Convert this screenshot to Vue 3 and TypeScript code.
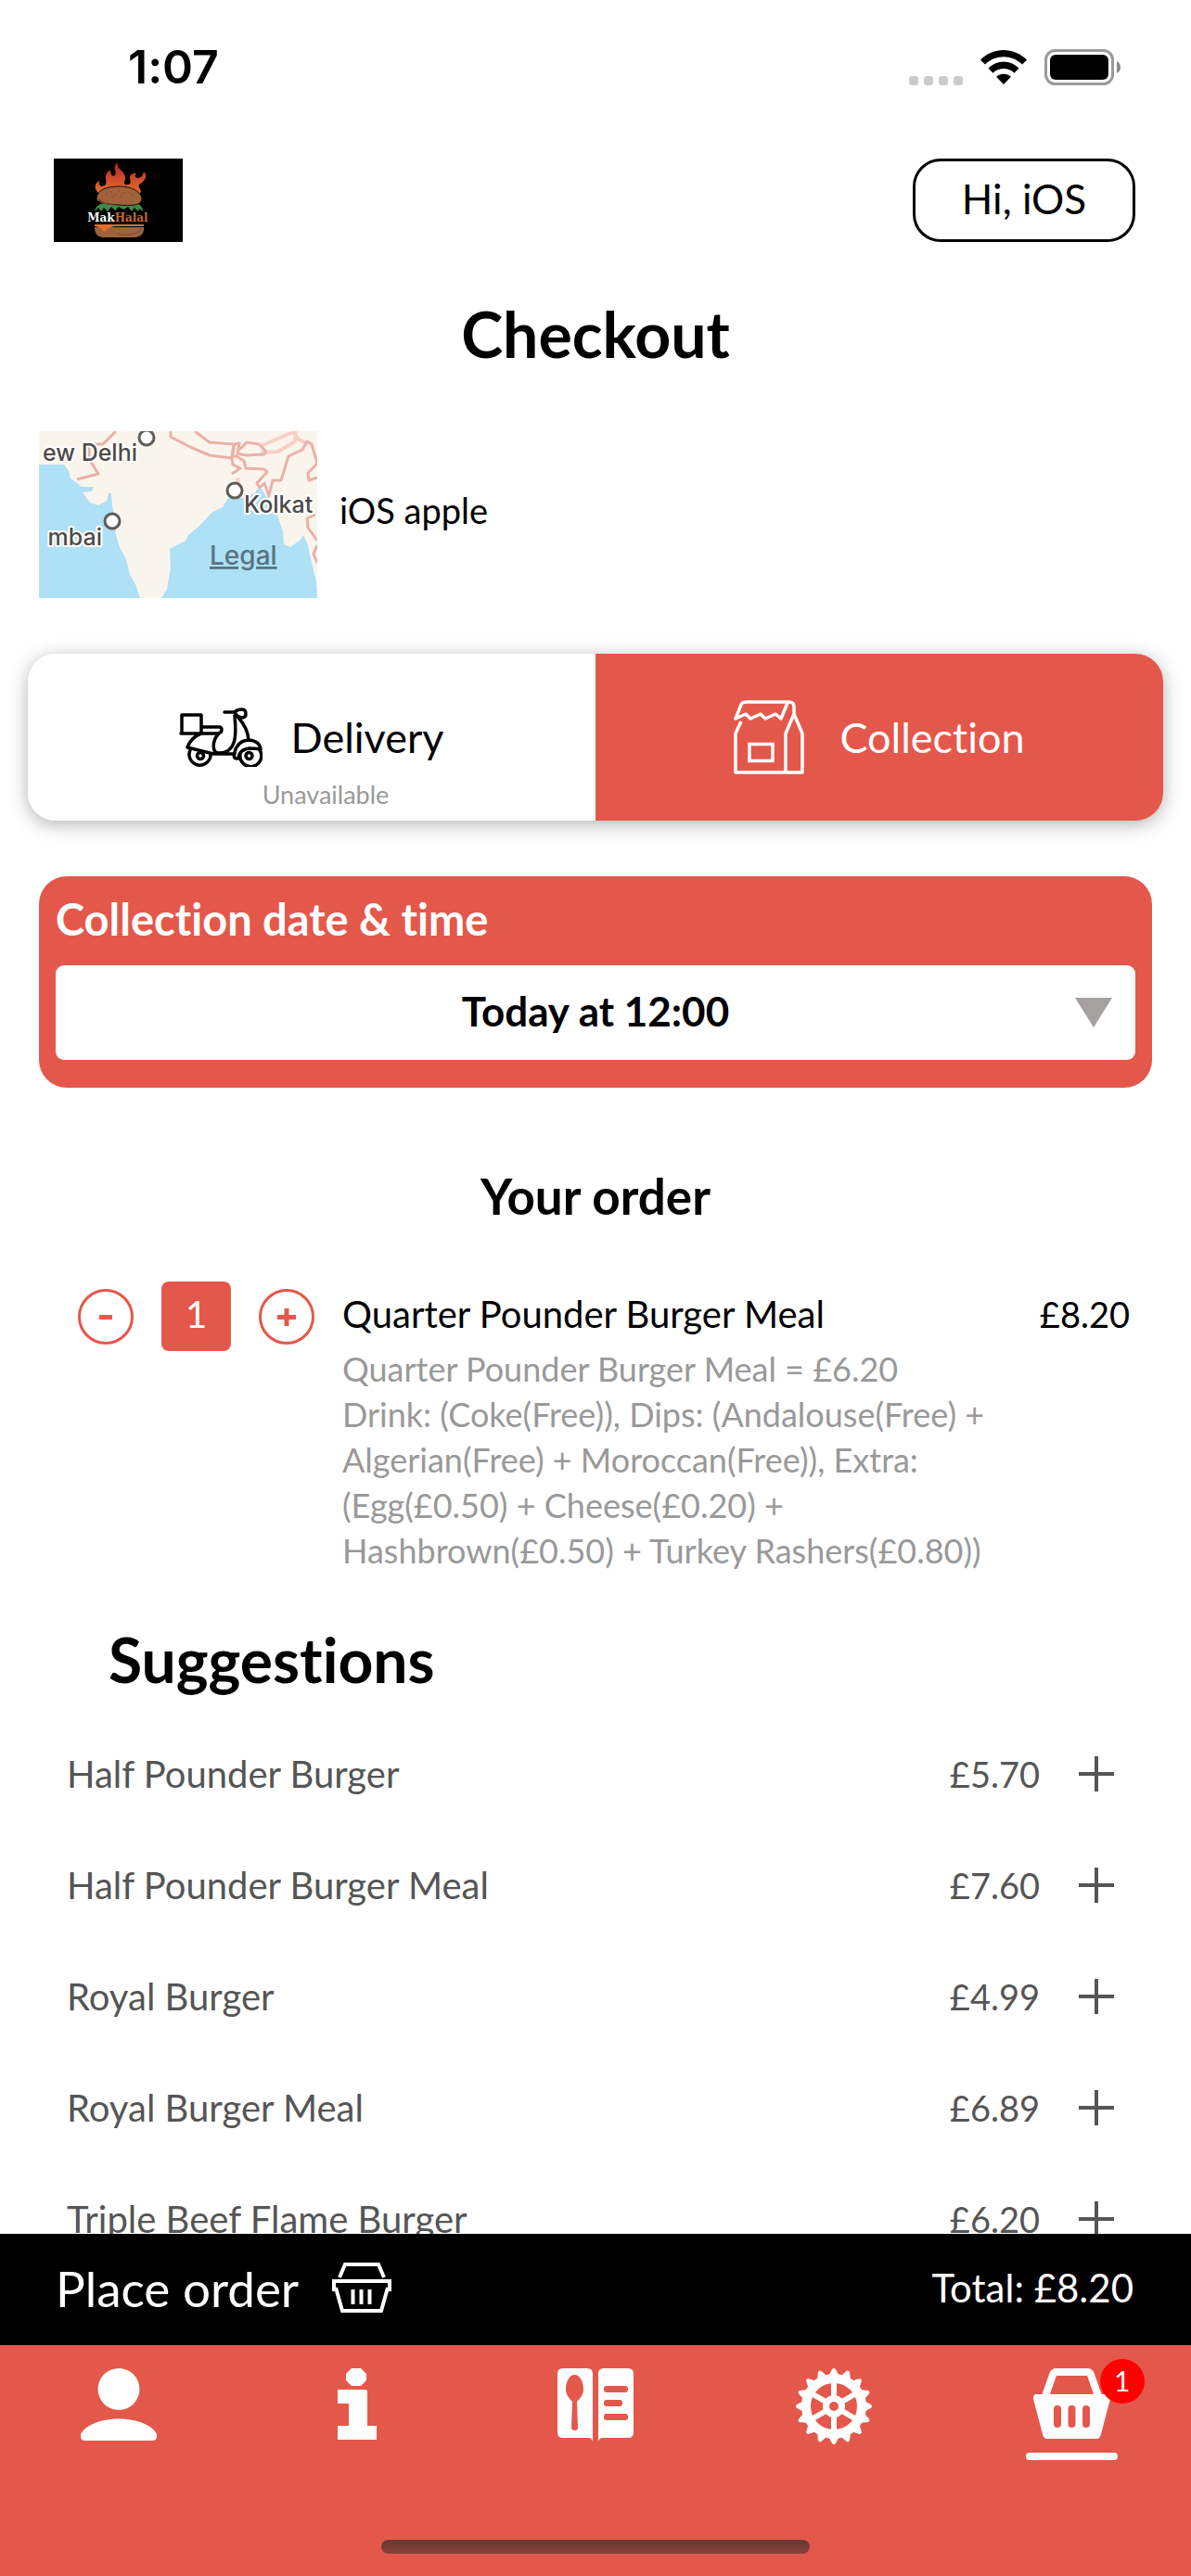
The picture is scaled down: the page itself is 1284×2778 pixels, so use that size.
<script setup lang="ts">
import { computed, ref } from 'vue'

interface Suggestion {
  name: string
  price: string
}

const suggestions: Suggestion[] = [
  { name: 'Half Pounder Burger', price: '£5.70' },
  { name: 'Half Pounder Burger Meal', price: '£7.60' },
  { name: 'Royal Burger', price: '£4.99' },
  { name: 'Royal Burger Meal', price: '£6.89' },
  { name: 'Triple Beef Flame Burger', price: '£6.20' },
]

const orderDetails: string[] = [
  'Quarter Pounder Burger Meal = £6.20',
  'Drink: (Coke(Free)), Dips: (Andalouse(Free) +',
  'Algerian(Free) + Moroccan(Free)), Extra:',
  '(Egg(£0.50) + Cheese(£0.20) +',
  'Hashbrown(£0.50) + Turkey Rashers(£0.80))',
]

const unitPrice = 8.2
const quantity = ref(1)
const slot = ref('Today at 12:00')
const total = computed(() => `£${(unitPrice * quantity.value).toFixed(2)}`)

const gearTeeth = Array.from({ length: 16 }, (_, i) => i * 22.5)
const gearSpokes = [0, 60, 120]

function decrease(): void {
  if (quantity.value > 1) quantity.value--
}
</script>

<template>
  <div class="screen">
    <div class="status">
      <span class="clock">1:07</span>
      <div class="status-icons">
        <svg width="58" height="10" viewBox="0 0 58 10" class="signal">
          <rect v-for="i in 4" :key="i" :x="(i - 1) * 16" width="10" height="10" rx="3" fill="#cbcbcb" />
        </svg>
        <svg width="50" height="37" viewBox="0 0 50 37">
          <path d="M0 10.500C14-3.500 36-3.500 50 10.500L45 15.500C34 4.500 16 4.500 5 15.500Z" />
          <path d="M8.500 19.500C18 10.300 32 10.300 41.500 19.500L36.500 24.700C30 18.500 20 18.500 13.500 24.700Z" />
          <path d="M17 28.700C21.500 24.800 28.500 24.800 33 28.700L25 37Z" />
        </svg>
        <svg width="82" height="39" viewBox="0 0 82 39">
          <rect x="1.500" y="1.500" width="72" height="36" rx="10" fill="none" stroke="#9a9a9a" stroke-width="3" />
          <rect x="6" y="6" width="63" height="27" rx="6" />
          <path d="M78 13q4 2 4 6.500t-4 6.500z" fill="#8a8a8a" />
        </svg>
      </div>
    </div>

    <main class="content">
      <header class="top">
        <svg class="logo" width="139" height="90" viewBox="0 0 139 90" role="img" aria-label="MakHalal">
          <defs>
            <linearGradient id="flame" x1="0" y1="0" x2="0" y2="1">
              <stop offset="0" stop-color="#b3202f" />
              <stop offset="0.5" stop-color="#cf4a2d" />
              <stop offset="1" stop-color="#e2702c" />
            </linearGradient>
          </defs>
          <rect width="139" height="90" />
          <path
            fill="url(#flame)"
            d="M48 37C43 32 44 26 49 24C48 29 51 31 55 29C59 25 53 20 58 15C60 12 62 13 61 12C61 17 63 20 66 18C69 14 62 10 69 4C67 12 76 12 77 20C78 24 74 25 77 28C82 29 84 26 82 22C81 17 86 15 89 16C85 20 91 23 95 19C97 17 95 15 98 15C102 20 96 26 92 28C90 32 96 33 93 38Z"
          />
          <path d="M44 57C45 51 49 49 54 48H88C93 49 96 52 96 57L92 54L91 57L87 53L84 57L80 52L75 55L70 52L66 56L62 52L58 57L54 53L51 57L48 53Z" fill="#3f8a46" />
          <path d="M46 43C47 33 58 30 71 30S95 36 95 44C94 51 83 51 70 50S46 48 46 43Z" fill="#a0623b" stroke="#1a0d08" />
          <path d="M48 42C52 48 62 50 72 50C60 51 47 49 48 42Z" fill="#7a4030" />
          <path d="M56 38h1M61 36h1M66 39h1M70 35h1M75 37h1M80 36h1M84 39h1M63 41h1M72 41h1" stroke="#6b3520" />
          <path d="M44 74H97C98 82 92 85 86 85H55C48 85 44 82 44 74Z" fill="#a0623b" />
          <path d="M44 71H97V73H66Q58 74 54 79Q50 73 44 73Z" fill="#e2702c" />
          <path d="M70 82H84Q91 81 94 76" fill="none" stroke="#7a4030" />
          <text x="69" y="68" class="logo-text" text-anchor="middle"><tspan fill="#fff">Mak</tspan><tspan fill="#c96530">Halal</tspan></text>
        </svg>
        <button class="greeting" type="button">Hi, iOS</button>
      </header>

      <h1>Checkout</h1>

      <section class="address">
        <svg class="map" width="300" height="180" viewBox="0 0 300 180">
          <rect width="300" height="180" fill="#f9f5ed" />
          <path
            fill="#aee0f6"
            d="M0 36H27L32 43L34 51L41 56L46 60L59 60L57 65L47 66L55 77L64 80L73 75L75 67H78L79 80L81 92L83 112L87 125L94 138L98 155L104 165L109 180H0Z"
          />
          <path
            fill="#aee0f6"
            d="M132 180L138 170L142 147L141 127L158 118L161 112L173 102L187 87L198 82L204 72L219 72L233 67L235 62L240 62L246 72L256 88L263 108L264 122L271 125L282 117L285 112L290 123L294 142L299 162L300 180Z"
          />
          <g fill="none" stroke="#f9cfc8" stroke-width="4">
            <path d="M239 16L274 1L280 9L288 13M239 23L258 22L276 11L277 0M214 50L215 58" />
          </g>
          <g fill="none" stroke="#e9b1a8" stroke-width="3" stroke-linejoin="round">
            <path d="M83 0L69 14H54V30L64 46L41 52" />
            <path d="M142 0V6L163 17L184 26L208 29L211 14L216 13L214 24L223 26L243 25L244 21L237 14L224 12L216 20" />
            <path d="M168 0L184 12L210 14L208 27L213 27L221 32L223 40L243 41L246 44L235 56L238 61L243 56L248 70L252 53L261 53L269 27L284 20L289 11L294 14L300 35L290 45L291 53L300 50" />
            <path d="M208 29L209 36L217 40L208 46M298 90L289 94L290 104L300 118M300 123L296 132L300 142" />
          </g>
          <g fill="#fff" stroke="#5f5c57" stroke-width="3">
            <circle cx="116" cy="7" r="8" />
            <circle cx="211" cy="64" r="8" />
            <circle cx="79" cy="97" r="8" />
          </g>
          <g class="map-labels">
            <text x="106" y="32" text-anchor="end">ew Delhi</text>
            <text x="68" y="123" text-anchor="end">mbai</text>
            <text x="221" y="88">Kolkat</text>
          </g>
          <a href="#legal"><text x="184" y="144" class="legal">Legal</text></a>
        </svg>
        <span class="address-name">iOS apple</span>
      </section>

      <div class="methods">
        <button class="method" type="button" aria-pressed="false">
          <span class="method-main delivery">
            <svg width="90" height="64" viewBox="0 0 90 64" fill="none" stroke="#000" stroke-width="3.500" stroke-linecap="round" stroke-linejoin="round">
              <path d="M3 28V8H24V28M2 28H40Q46 28 46 24Q46 21 43 21H25" />
              <path d="M49 5H60Q63 2 68 2Q72 2 72 7Q72 11 67 11Q61 9 60 5" />
              <path d="M60 9C62 30 62 49 43 49C35 49 36 36 42 29M24 28Q13 32 9 43L37 50H60" />
              <path d="M64 11Q74 22 75 35M62 55Q58 55 60 48Q63 36 75 35Q87 36 88 45Q80 44 76 44Q65 45 64 55Z" />
              <path d="M12 46A11.500 11.500 0 1 0 34 50M66 50A11.500 11.500 0 1 0 87 46" />
              <circle cx="23" cy="52" r="3.500" />
              <circle cx="75.500" cy="52" r="3.500" />
            </svg>
            Delivery
          </span>
          <span class="method-note">Unavailable</span>
        </button>
        <button class="method selected" type="button" aria-pressed="true">
          <span class="method-main collection">
            <svg width="76" height="80" viewBox="0 0 76 80" fill="none" stroke="#fff" stroke-width="3.500">
              <path d="M8 23L2 36V78H74V36L65 15L56 36V78M65 16V7Q65 2 59 2H14Q9 2 8 5L2 20L13 15L18 20L29 15L34 20L45 15L51 20L58 3" stroke-linejoin="round" />
              <rect x="17" y="47.500" width="25" height="18" />
            </svg>
            Collection
          </span>
        </button>
      </div>

      <section class="schedule">
        <label for="slot">Collection date &amp; time</label>
        <div class="select-wrap">
          <select id="slot" v-model="slot">
            <option>Today at 12:00</option>
          </select>
          <svg class="caret" width="40" height="32" viewBox="0 0 40 32"><path d="M0 0H40L20 32Z" fill="#a5a1a0" /></svg>
        </div>
      </section>

      <h2>Your order</h2>

      <section class="order">
        <div class="stepper">
          <button class="round" type="button" aria-label="Remove one" @click="decrease">
            <svg width="20" height="24" viewBox="0 0 20 24"><path d="M3 12.500H17" stroke-width="5" /></svg>
          </button>
          <span class="quantity">{{ quantity }}</span>
          <button class="round" type="button" aria-label="Add one" @click="quantity++">
            <svg width="20" height="24" viewBox="0 0 20 24"><path d="M0 12.500H20M10 3V22" stroke-width="5" /></svg>
          </button>
        </div>
        <div class="item">
          <div class="item-head">
            <span>Quarter Pounder Burger Meal</span>
            <span class="price">{{ total }}</span>
          </div>
          <div class="details">
            <div v-for="line in orderDetails" :key="line">{{ line }}</div>
          </div>
        </div>
      </section>

      <h3>Suggestions</h3>
      <ul class="suggestions">
        <li v-for="s in suggestions" :key="s.name">
          <span class="name">{{ s.name }}</span>
          <span class="price">{{ s.price }}</span>
          <button class="add" type="button" :aria-label="`Add ${s.name}`">
            <svg width="38" height="38" viewBox="0 0 38 38"><path d="M0 19H38M19 0V38" stroke="#555" stroke-width="4" /></svg>
          </button>
        </li>
      </ul>
    </main>

    <button class="place-order" type="button">
      <span class="place">
        Place order
        <svg width="64" height="54" viewBox="0 0 64 54" fill="none" stroke="#fff" stroke-width="4">
          <path d="M8 16L14 2H50L56 16M2 31V20H62V31M4 27L11 52H53L60 27M22.500 29V45M31.500 29V45M40.500 29V45" />
        </svg>
      </span>
      <span class="total">Total: {{ total }}</span>
    </button>

    <nav class="tabs">
      <div class="tab-row">
        <a href="#account" aria-label="Account">
          <svg width="82" height="78" viewBox="0 0 82 78" fill="#fff">
            <circle cx="41" cy="22.500" r="22.500" />
            <path d="M0 71C5 61 22 54.500 41 54.500S77 61 82 71Q83 78 77 78H5Q-1 78 0 71Z" />
          </svg>
        </a>
        <a href="#info" aria-label="Information">
          <svg width="42" height="77" viewBox="0 0 42 77" fill="#fff">
            <path d="M15 0H25L31 6V13L25 19H15L9 13V6Z" stroke-linejoin="round" />
            <path d="M0 23H30Q32 23 32 25V62H42V77H0V62H12V38H0Z" />
          </svg>
        </a>
        <a href="#menu" aria-label="Menu">
          <svg width="82" height="79" viewBox="0 0 82 79" fill="#fff">
            <path d="M6 0H32Q38 0 38 6V79Q37 75 33 75H6Q0 75 0 69V6Q0 0 6 0Z" />
            <path d="M50 0H76Q82 0 82 6V69Q82 75 76 75H49Q45 75 44 79V6Q44 0 50 0Z" />
            <g class="cutout">
              <path d="M18.500 7C24 7 28 14 28 23C28 29 23 34 21 36L22 64Q22 67 18.500 67T15 64L16 36C14 34 9 29 9 23C9 14 13 7 18.500 7Z" />
              <rect x="50" y="19" width="26" height="7" rx="3" />
              <rect x="50" y="34" width="20" height="7" rx="3" />
              <rect x="50" y="49" width="26" height="7" rx="3" />
            </g>
          </svg>
        </a>
        <a href="#settings" aria-label="Settings">
          <svg width="82" height="82" viewBox="-41 -41 82 82" fill="none" stroke="#fff">
            <path v-for="t in gearTeeth" :key="t" d="M-5 -33L-2 -39Q0 -43 2 -39L5 -33Z" :transform="`rotate(${t})`" fill="#fff" stroke-width="1" />
            <circle r="30" stroke-width="10" />
            <path v-for="s in gearSpokes" :key="s" d="M0 -27V-8M0 8V27" :transform="`rotate(${s})`" stroke-width="6" />
            <circle r="8.500" stroke-width="7" />
          </svg>
        </a>
        <a href="#basket" class="active" aria-label="Basket" aria-current="page">
          <svg width="83" height="76" viewBox="0 0 83 76" fill="#fff">
            <path d="M13 30L21 7Q22 4 25 4H58Q61 4 62 7L70 30" fill="none" stroke="#fff" stroke-width="8" />
            <path d="M3 28H80Q83 28 83 33L73 71Q72 76 68 76H15Q11 76 10 71L0 33Q0 28 3 28Z" />
            <path class="cutout-line" d="M26 44V60M41.500 44V60M57 44V60" />
          </svg>
          <span class="badge">{{ quantity }}</span>
        </a>
      </div>
      <div class="home-bar"></div>
    </nav>
  </div>
</template>

<style>
body {
  margin: 0;
  background: #fff;
}
</style>

<style scoped>
.screen {
  --accent: #e4584b;
  display: flex;
  flex-direction: column;
  height: 100vh;
  overflow: hidden;
  color: #000;
  font-family: Lato, "Noto Sans", sans-serif;
  font-size: 40px;
  font-variant-ligatures: none;
}
* {
  box-sizing: border-box;
}
svg {
  display: block;
  flex: none;
}
button,
select {
  margin: 0;
  padding: 0;
  border: 0;
  background: none;
  color: inherit;
  font: inherit;
  font-variant-ligatures: none;
}
.status {
  flex: none;
  display: flex;
  align-items: center;
  justify-content: space-between;
  height: 144px;
  padding: 0 76px 0 138px;
}
.clock {
  font-family: Inter, sans-serif;
  font-size: 50px;
  font-weight: 600;
}
.status-icons {
  display: flex;
  align-items: center;
  gap: 19px;
}
.signal {
  align-self: flex-end;
}
.content {
  flex: 1;
  min-height: 0;
  overflow: hidden;
}
.top {
  display: flex;
  justify-content: space-between;
  margin-top: 27px;
  padding: 0 60px 0 58px;
}
.logo-text {
  font-family: "DejaVu Serif", serif;
  font-size: 12px;
  font-weight: 700;
}
.greeting {
  width: 240px;
  height: 90px;
  padding-bottom: 4px;
  border: 3px solid #000;
  border-radius: 30px;
  font-size: 44px;
}
h1,
h2,
h3 {
  margin: 0;
  text-align: center;
  font-weight: 700;
}
h1 {
  margin-top: 59px;
  font-size: 68px;
  line-height: 80px;
}
.address {
  display: flex;
  align-items: center;
  gap: 24px;
  margin-top: 65px;
  padding: 0 42px;
}
.address-name {
  padding-bottom: 10px;
  font-size: 38px;
  line-height: 48px;
}
.map-labels {
  fill: #4d4a46;
  stroke: #fff;
  stroke-width: 4px;
  stroke-linejoin: round;
  paint-order: stroke;
  font-family: Inter, sans-serif;
  font-size: 25px;
  font-weight: 500;
}
.legal {
  fill: #587481;
  font-family: Inter, sans-serif;
  font-size: 28px;
  font-weight: 500;
  text-decoration: underline;
}
.methods {
  display: flex;
  margin: 60px 30px 0;
  border-radius: 30px;
  box-shadow: 0 4px 20px rgba(0, 0, 0, 0.3);
}
.method {
  flex: 1;
  height: 180px;
  padding-top: 50px;
  display: flex;
  flex-direction: column;
  align-items: center;
  background: #fff;
  border-radius: 30px 0 0 30px;
}
.method.selected {
  background: var(--accent);
  color: #fff;
  border-radius: 0 30px 30px 0;
}
.method-main {
  display: flex;
  align-items: center;
  gap: 30px;
  height: 80px;
  font-size: 45px;
}
.collection {
  gap: 38px;
}
.method-note {
  margin-top: 4px;
  padding-left: 30px;
  color: #999;
  font-size: 27px;
  line-height: 36px;
}
.schedule {
  margin: 60px 42px 0;
  padding: 0 18px 30px;
  border-radius: 30px;
  background: var(--accent);
}
.schedule label {
  display: block;
  padding-bottom: 4px;
  color: #fff;
  font-size: 47px;
  font-weight: 700;
  line-height: 92px;
}
.select-wrap {
  position: relative;
}
select {
  display: block;
  width: 100%;
  height: 102px;
  padding-bottom: 4px;
  appearance: none;
  border-radius: 9px;
  background: #fff;
  font-size: 44px;
  font-weight: 700;
  text-align: center;
  text-align-last: center;
}
.caret {
  position: absolute;
  top: 35px;
  right: 25px;
  pointer-events: none;
}
h2 {
  margin-top: 87px;
  font-size: 53px;
  line-height: 60px;
}
.order {
  display: flex;
  gap: 30px;
  margin-top: 62px;
  padding: 0 66px 0 84px;
}
.stepper {
  flex: none;
  display: flex;
  align-items: center;
  gap: 30px;
  height: 75px;
}
.round {
  display: flex;
  align-items: center;
  justify-content: center;
  width: 60px;
  height: 60px;
  border: 3px solid var(--accent);
  border-radius: 50%;
  stroke: var(--accent);
}
.quantity {
  width: 75px;
  height: 75px;
  border-radius: 8px;
  background: var(--accent);
  color: #fff;
  text-align: center;
  line-height: 71px;
}
.item {
  flex: 1;
}
.item-head {
  display: flex;
  justify-content: space-between;
  line-height: 70px;
}
.price {
  font-size: 38px;
}
.details {
  color: #999;
  font-size: 36px;
  line-height: 49px;
}
h3 {
  margin-top: 53px;
  padding-left: 117px;
  font-size: 66px;
  line-height: 80px;
  text-align: left;
}
.suggestions {
  margin: 23px 0 0;
  padding: 0 83px 0 72px;
  list-style: none;
  color: #555;
}
.suggestions li {
  display: flex;
  align-items: center;
  height: 120px;
}
.name {
  flex: 1;
}
.add {
  margin-left: 42px;
}
.place-order {
  flex: none;
  display: flex;
  align-items: center;
  justify-content: space-between;
  height: 120px;
  padding: 0 62px 4px 60px;
  background: #000;
  color: #fff;
}
.place {
  display: flex;
  align-items: center;
  gap: 36px;
  font-size: 53px;
}
.total {
  font-size: 42px;
}
.tabs {
  flex: none;
  padding: 25px 0 24px;
  background: var(--accent);
}
.tab-row {
  display: flex;
  height: 185px;
}
.tab-row a {
  position: relative;
  flex: 1;
  display: flex;
  flex-direction: column;
  align-items: center;
}
.cutout {
  fill: var(--accent);
}
.cutout-line {
  stroke: var(--accent);
  stroke-width: 8px;
  stroke-linecap: round;
}
.active::after {
  content: "";
  width: 99px;
  height: 8px;
  margin-top: 15px;
  border-radius: 4px;
  background: #fff;
}
.badge {
  position: absolute;
  top: -10px;
  left: 50%;
  margin-left: 30px;
  width: 48px;
  height: 48px;
  border-radius: 50%;
  background: #f00;
  color: #fff;
  font-size: 30px;
  line-height: 46px;
  text-align: center;
}
.home-bar {
  width: 36%;
  height: 15px;
  margin: 0 auto;
  border-radius: 8px;
  background: linear-gradient(#673731, #87413a);
}
</style>
